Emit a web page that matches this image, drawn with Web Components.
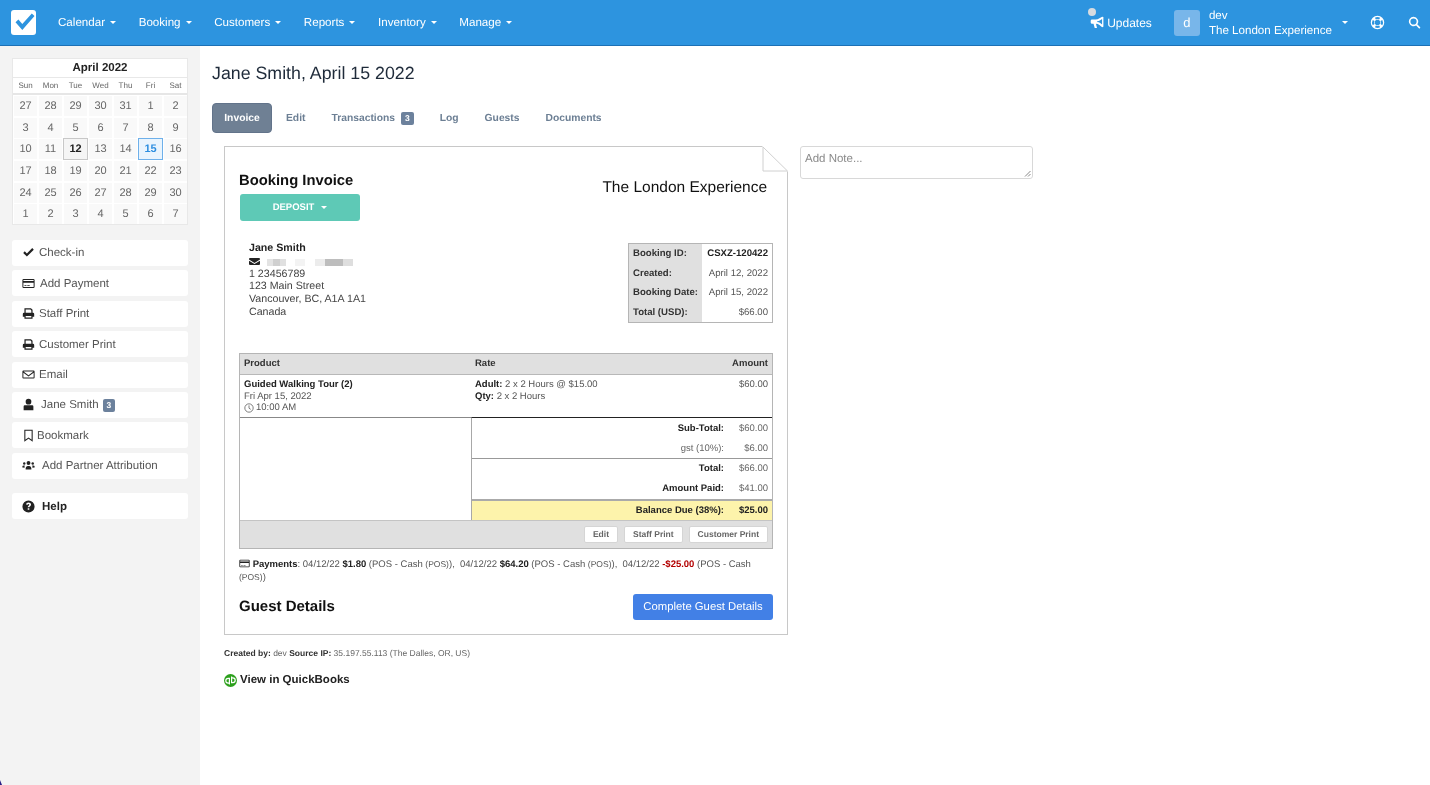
<!DOCTYPE html>
<html lang="en"><head><meta charset="utf-8"><title>Jane Smith</title>
<style>
html,body{margin:0;padding:0;height:100%}
body{font-family:"Liberation Sans",Arial,sans-serif;color:#333;background:#fff;overflow:hidden;text-rendering:geometricPrecision}
</style></head><body>
<app-shell></app-shell>
<script>
const I={
check:'<path d="M1.500 8.500 3.400 6.600 6 9.200 12.600 2.600 14.500 4.500 6 13z"/>',
card:'<path fill-rule="evenodd" d="M2 2.500h12A1.500 1.500 0 0 1 15.500 4v8a1.500 1.500 0 0 1-1.500 1.500H2A1.500 1.500 0 0 1 .5 12V4A1.500 1.500 0 0 1 2 2.500zm0 1.200a.3.3 0 0 0-.3.3v1h12.600V4a.3.3 0 0 0-.3-.3zM1.700 7.200V12a.3.3 0 0 0 .3.3h12a.3.3 0 0 0 .3-.3V7.200zM3 10h2.500v1H3zm3.500 0h3v1h-3z"/>',
print:'<path fill-rule="evenodd" d="M3 1.500h8l2 2V7h.5A1.500 1.500 0 0 1 15 8.500V12h-2v2.500H3V12H1V8.500A1.500 1.500 0 0 1 2.500 7H3zM4.500 3v4h7V4.200L10.400 3zM4.500 11v2h7v-2z"/>',
mail:'<path fill-rule="evenodd" d="M1.800 3h12.400A1.300 1.300 0 0 1 15.500 4.300v7.400a1.300 1.300 0 0 1-1.300 1.300H1.800A1.300 1.300 0 0 1 .5 11.700V4.300A1.300 1.300 0 0 1 1.800 3zm.1 1.200 6.100 4.700 6.100-4.700zm-.2 1.500v6.100h12.600V5.700L8 10.500z"/>',
mailf:'<path d="M1.500 3h13A1.500 1.500 0 0 1 16 4.500v.6L8 10 0 5.100v-.6A1.500 1.500 0 0 1 1.500 3zM0 6.800l8 4.900 8-4.900v4.700A1.500 1.500 0 0 1 14.500 13h-13A1.500 1.500 0 0 1 0 11.500z"/>',
user:'<circle cx="8" cy="4.500" r="3.500"/><path d="M3.500 9h9A1.500 1.500 0 0 1 14 10.500V15H2v-4.500A1.500 1.500 0 0 1 3.500 9z"/>',
bookmark:'<path fill="none" stroke="currentColor" stroke-width="1.300" d="M3.500 1.500h9v13L8 11.200 3.500 14.500z"/>',
users:'<circle cx="8" cy="5" r="2.400"/><circle cx="2.800" cy="5.500" r="1.500"/><circle cx="13.200" cy="5.500" r="1.500"/><path d="M4.500 13v-1.600A2.900 2.900 0 0 1 7 8.500h2a2.900 2.900 0 0 1 2.500 2.900V13z"/><path d="M.5 10.500A2 2 0 0 1 2.500 8h1A4 4 0 0 0 3.300 10.800zM15.500 10.500A2 2 0 0 0 13.500 8h-1a4 4 0 0 1 .2 2.800z"/>',
help:'<path fill-rule="evenodd" d="M8 .5a7.500 7.500 0 1 1 0 15 7.500 7.500 0 0 1 0-15zM8 3C6.300 3 5.200 4 5 5.500l2 .3C7.100 5.200 7.400 4.900 8 4.900c.6 0 1 .3 1 .8 0 1-2 1.200-2 3.300h2c0-1.300 2.100-1.500 2.100-3.500C11.100 4 9.700 3 8 3zM7 10v2h2v-2z"/>',
bullhorn:'<path fill-rule="evenodd" d="M15.300 1.200V12.400L13.900 12.800 10.800 10.200C9.600 9.300 8.200 8.900 6.800 8.800L8 13.600H5.400L4 8.800H2.300A1.500 1.500 0 0 1 .8 7.300V5.500A1.500 1.500 0 0 1 2.300 4H6.400C8 4 9.500 3.500 10.800 2.500L13.900.8zM13.800 3.300 11.700 4.800C10.600 5.500 9.400 5.900 8.200 6V6.900C9.400 7 10.600 7.400 11.700 8.100L13.800 9.700z"/>',
life:'<path fill-rule="evenodd" d="M8 .8a7.200 7.200 0 1 1 0 14.400A7.200 7.200 0 0 1 8 .8zM8 5.100a2.900 2.900 0 1 0 0 5.800 2.900 2.900 0 0 0 0-5.800zM5.200 2.900 6.300 4.800a3.600 3.600 0 0 1 3.400 0l1.100-1.900a5.800 5.800 0 0 0-5.600 0zM2.900 5.200a5.800 5.800 0 0 0 0 5.600l1.900-1.100a3.600 3.600 0 0 1 0-3.400zM13.100 5.200 11.200 6.300a3.600 3.600 0 0 1 0 3.400l1.900 1.100a5.800 5.800 0 0 0 0-5.600zM6.300 11.200 5.200 13.100a5.800 5.800 0 0 0 5.600 0L9.700 11.200a3.600 3.600 0 0 1-3.400 0z"/>',
search:'<path fill-rule="evenodd" d="M6.800 1a5.800 5.800 0 0 1 4.600 9.300l3.900 3.900-1.400 1.400-3.900-3.900A5.800 5.800 0 1 1 6.800 1zm0 2a3.800 3.800 0 1 0 0 7.600 3.800 3.800 0 0 0 0-7.600z"/>',
clock:'<circle cx="8" cy="8" r="6.700" fill="none" stroke="currentColor" stroke-width="1.200"/><path fill="none" stroke="currentColor" stroke-width="1.200" d="M8 3.800V8.300l2.800 1.900"/>'
};
const svg=(n,s=14,extra='')=>`<svg viewBox="0 0 16 16" width="${s}" height="${s}" fill="currentColor" style="display:block;flex:none;${extra}" aria-hidden="true">${I[n]}</svg>`;
function def(name,html,setup){
  customElements.define(name,class extends HTMLElement{
    constructor(){super();const r=this.attachShadow({mode:'open'});r.innerHTML=typeof html==='function'?html(this):html;}
    connectedCallback(){ if(typeof html==='function'){this.shadowRoot.innerHTML=html(this);} if(setup)setup(this);}
  });
}
const caret=c=>`<i style="display:inline-block;width:0;height:0;border:3.500px solid transparent;border-top:3.500px solid ${c};border-bottom:0;vertical-align:2px"></i>`;

def('nav-item',h=>`<style>:host{display:block;color:#fff;font-size:11.600px;white-space:nowrap}
span{margin-right:5px}</style><span>${h.getAttribute('label')||''}</span>${caret('#fff')}`);

def('top-bar',`<style>
:host{display:flex;align-items:center;height:45px;background:#2d94df;border-bottom:1px solid #1c70b5;box-sizing:content-box;color:#fff;flex:none}
.logo{width:25px;height:25px;background:#fff;border-radius:3px;margin-left:11px;margin-right:22px;flex:none;display:flex;align-items:center;justify-content:center}
nav{display:flex;gap:22.600px;flex:1}
.upd{position:relative;display:flex;align-items:center;gap:3px;font-size:12px;margin-right:22px}
.dot{position:absolute;left:-2px;top:-8px;width:8px;height:8px;border-radius:50%;background:#d6dbe0}
.acct{display:flex;align-items:center;margin-right:22px}
.ava{width:26px;height:26px;background:#78b6ea;border-radius:3px;display:flex;align-items:center;justify-content:center;font-size:13px;margin-right:9px}
.who{font-size:11.600px;line-height:15px;margin-right:10px;white-space:nowrap}
.r{display:flex;align-items:center}
</style>
<div class="logo"><svg viewBox="0 0 25 25" width="25" height="25" aria-hidden="true"><path d="M4.500 12.200 7.400 9.600 11.300 14 20.800 3.500 23.500 6 11.300 20z" fill="#2d94df"/></svg></div>
<nav><nav-item label="Calendar"></nav-item><nav-item label="Booking"></nav-item><nav-item label="Customers"></nav-item><nav-item label="Reports"></nav-item><nav-item label="Inventory"></nav-item><nav-item label="Manage"></nav-item></nav>
<div class="upd"><b class="dot"></b>${svg('bullhorn',14)}<span>Updates</span></div>
<div class="acct"><div class="ava">d</div><div class="who">dev<br>The London Experience</div>${caret('#fff')}</div>
<div class="r" style="margin-right:23px">${svg('life',15)}</div>
<div class="r" style="margin-right:9px">${svg('search',13)}</div>`);

def('mini-calendar',()=>{
 const days=[27,28,29,30,31,1,2,3,4,5,6,7,8,9,10,11,12,13,14,15,16,17,18,19,20,21,22,23,24,25,26,27,28,29,30,1,2,3,4,5,6,7];
 return `<style>
:host{display:block;width:176px;box-sizing:border-box;border:1px solid #e8e8e8;background:#fff;margin-bottom:14.500px}
.t{text-align:center;font-size:11.500px;font-weight:bold;color:#222;line-height:19px;height:18px;border-bottom:1px solid #e8e8e8}
.d,.g{display:grid;grid-template-columns:repeat(7,25px);}
.d{font-size:8px;color:#666;height:15px;line-height:15px;text-align:center;border-bottom:2px solid #e6e6e6;margin-bottom:1px}
.g{row-gap:1.700px}
.g div{height:20px;line-height:20px;margin:0 1px;font-size:11px;color:#666;background:#f9f9f9;text-align:center;box-sizing:border-box}
.g .a{border:1px solid #c8c8c8;background:#f5f5f5;color:#222;font-weight:bold;margin:-1px 0;height:22px}
.g .b{border:1px solid #6eb0ea;background:#e9f4fd;color:#2d8ee0;font-weight:bold;margin:-1px 0;height:22px}
</style><div class="t">April 2022</div>
<div class="d">${['Sun','Mon','Tue','Wed','Thu','Fri','Sat'].map(x=>`<span>${x}</span>`).join('')}</div>
<div class="g">${days.map((x,i)=>`<div class="${i==16?'a':i==19?'b':''}">${x}</div>`).join('')}</div>`});

def('side-btn',h=>`<style>:host{display:flex;align-items:center;height:26px;background:#fff;border-radius:3px;font-size:11.500px;color:#555;padding:1px 0 0 10px;box-sizing:border-box;margin-bottom:4.400px;white-space:nowrap}
:host([strong]){font-weight:bold;color:#222}
.ic{color:#222;margin:-1px ${h.getAttribute('gap')||6}px 0 0}
.bd{background:#6c819c;color:#fff;font-size:8.500px;font-weight:bold;border-radius:2px;padding:1px 4px;margin-left:4px;line-height:11px}
</style><span class="ic">${svg(h.getAttribute('icon'),13)}</span><slot></slot>${h.hasAttribute('badge')?`<span class="bd">${h.getAttribute('badge')}</span>`:''}`);

def('side-bar',`<style>:host{display:block;width:200px;flex:none;background:#f3f3f3;box-sizing:border-box;padding:12px 12px 0;height:739px}</style>
<mini-calendar></mini-calendar>
<side-btn icon="check" gap="4">Check-in</side-btn>
<side-btn icon="card" gap="5">Add Payment</side-btn>
<side-btn icon="print" gap="4">Staff Print</side-btn>
<side-btn icon="print" gap="4">Customer Print</side-btn>
<side-btn icon="mail" gap="4">Email</side-btn>
<side-btn icon="user" gap="6" badge="3">Jane Smith</side-btn>
<side-btn icon="bookmark" gap="2">Bookmark</side-btn>
<side-btn icon="users" gap="7">Add Partner Attribution</side-btn>
<div style="height:10px"></div>
<side-btn icon="help" gap="7" strong>Help</side-btn>`);

def('tab-bar',`<style>:host{display:flex;align-items:center;height:30px;font-size:10.300px;font-weight:bold;color:#6c7f94;white-space:nowrap}
.on{background:#6f8094;color:#fff;border-radius:4px;width:60px;height:30px;display:flex;align-items:center;justify-content:center;border:1px solid #62738a;box-sizing:border-box;margin-right:14px}
span{margin-right:26px;display:flex;align-items:center}
.bd{background:#6c819c;color:#fff;font-size:8.500px;border-radius:2px;padding:1px 4px;margin-left:6px;line-height:11px;display:block}
</style><div class="on">Invoice</div><span>Edit</span><span>Transactions<b class="bd">3</b></span><span>Log</span><span>Guests</span><span>Documents</span>`);

def('customer-card',`<style>:host{display:block;font-size:10.650px;line-height:12.800px;color:#444;padding:1px 0 0 10px}
b{color:#222}
.m{display:flex;align-items:center;height:12.800px;color:#222}
.blur{display:flex;margin-left:7px;height:7px;margin-top:3px}
.blur i{display:block;height:7px}
</style>
<b>Jane Smith</b>
<div class="m">${svg('mailf',11)}<div class="blur"><i style="width:6px;background:#e3e3e3"></i><i style="width:7px;background:#cfcfcf"></i><i style="width:6px;background:#e0e0e0"></i><i style="width:9px;background:#fff"></i><i style="width:10px;background:#f3f3f3"></i><i style="width:10px;background:#fff"></i><i style="width:10px;background:#ececec"></i><i style="width:18px;background:#bdbdbd"></i><i style="width:10px;background:#dedede"></i></div></div>
1 23456789<br>123 Main Street<br>Vancouver, BC, A1A 1A1<br>Canada`);

def('meta-table',`<style>:host{display:grid;grid-template-columns:73px 70px;grid-auto-rows:19.500px;width:145px;box-sizing:border-box;border:1px solid #b5b5b5;font-size:9.600px;color:#555;flex:none;background:linear-gradient(90deg,#e0e0e0 73px,#fff 73px)}
div{line-height:20px;white-space:nowrap}
.l{font-weight:bold;color:#333;padding-left:4px}
.v{text-align:right;padding-right:4px}
</style><div class="l">Booking ID:</div><div class="v" style="font-weight:bold;color:#222">CSXZ-120422</div>
<div class="l">Created:</div><div class="v">April 12, 2022</div>
<div class="l">Booking Date:</div><div class="v">April 15, 2022</div>
<div class="l">Total (USD):</div><div class="v">$66.00</div>`);

def('total-row',h=>`<style>:host{display:flex;justify-content:flex-end;height:20px;line-height:22px;font-size:9.500px;color:#666;padding-right:4px}
:host([tight]){line-height:20.500px}
.l{font-weight:bold;color:#222;margin-right:14px}
:host([plain]) .l{font-weight:normal;color:#666}
:host([hi]){background:#fdf3ab;color:#222;font-weight:bold;height:auto;flex:1;align-items:flex-start;line-height:19px}
span:last-child{width:30px;text-align:right}
</style><span class="l">${h.getAttribute('label')}</span><span>${h.getAttribute('value')}</span>`);

def('mini-btn',`<style>:host{display:block;background:#fff;border:1px solid #d5d5d5;border-radius:2px;font-size:8.500px;font-weight:bold;color:#666;height:17px;line-height:15px;padding:0 8px;box-sizing:border-box;white-space:nowrap}</style><slot></slot>`);

def('line-table',`<style>:host{display:block;border:1px solid #b5b5b5;font-size:9.500px;color:#555}
.c1{width:231px;flex:none;box-sizing:border-box}
.h{display:flex;background:#e0e0e0;height:20px;line-height:20.500px;font-weight:bold;color:#333;border-bottom:1px solid #b8b8b8;padding-left:4px}
.h .c1{width:227px;margin-right:4px}
.h span:last-child{margin-left:auto;padding-right:4px}
.p{display:flex;height:43px;padding:4px 4px 0;box-sizing:border-box;line-height:11.700px;border-bottom:1px solid #888}
.p .c1{width:227px;margin-right:4px}
.p b{color:#222}
.ck{display:flex;align-items:center;gap:2px}
.am{margin-left:auto}
.t{display:flex;height:102px}
.x{flex:1;border-left:1px solid #a8a8a8;border-top:1px solid #222;margin-top:-1px;display:flex;flex-direction:column;box-sizing:border-box;height:103px}
.grp{border-bottom:1px solid #999;height:40px;flex:none}
.grp.s{border-bottom:2px solid #aaa}
.f{display:flex;justify-content:flex-end;gap:6px;align-items:center;height:28px;background:#e0e0e0;border-top:1px solid #c4c4c4;padding-right:4px;box-sizing:border-box}
</style>
<div class="h"><span class="c1">Product</span><span>Rate</span><span>Amount</span></div>
<div class="p"><div class="c1"><b>Guided Walking Tour (2)</b><br>Fri Apr 15, 2022<div class="ck">${svg('clock',10)}10:00 AM</div></div><div><b>Adult:</b> 2 x 2 Hours @ $15.00<br><b>Qty:</b> 2 x 2 Hours</div><div class="am">$60.00</div></div>
<div class="t"><div class="c1"></div><div class="x"><div class="grp"><total-row label="Sub-Total:" value="$60.00"></total-row><total-row plain label="gst (10%):" value="$6.00"></total-row></div><div class="grp s"><total-row tight label="Total:" value="$66.00"></total-row><total-row tight label="Amount Paid:" value="$41.00"></total-row></div><total-row hi label="Balance Due (38%):" value="$25.00"></total-row></div></div>
<div class="f"><mini-btn>Edit</mini-btn><mini-btn>Staff Print</mini-btn><mini-btn>Customer Print</mini-btn></div>`);

def('invoice-doc',`<style>:host{display:block;position:relative;width:564px;height:489px;box-sizing:border-box;border:1px solid #c8c8c8;padding:0 14px;background:#fff;flex:none}
.fold{position:absolute;right:-1px;top:-1px;width:26px;height:26px}
.top{display:flex;justify-content:space-between;padding-top:25px}
h2{margin:0;font-size:14.800px;line-height:18px;color:#111;font-weight:bold}
.dep{width:120px;height:27px;margin:4px 0 0 1px;background:#5ec9b6;border-radius:3px;color:#fff;font-weight:bold;font-size:9.500px;display:flex;align-items:center;justify-content:center;gap:7px}
.co{font-size:15.500px;color:#111;margin:7px 6px 0 0;line-height:18px}
.mid{display:flex;justify-content:space-between;margin-top:20px;height:112px}
.pay{font-size:9.500px;line-height:13px;color:#555;margin-top:9px;height:26px}
.pay b{color:#222}.pay small{font-size:8.500px}.pay .red{color:#b30000}
.pay svg{display:inline-block!important;vertical-align:-2px}
.g{display:flex;justify-content:space-between;align-items:center;margin-top:10px}
.g h2{font-size:15px}
.cta{width:140px;height:26px;background:#4280e6;border-radius:3px;color:#fff;font-size:11.300px;display:flex;align-items:center;justify-content:center}
</style>
<svg class="fold" viewBox="0 0 26 26" aria-hidden="true"><path d="M0 0 L26 26 V0Z" fill="#fff"/><path d="M1 1 V25 H25.500 Z" fill="#fff" stroke="#d0d0d0"/></svg>
<div class="top"><div><h2>Booking Invoice</h2><div class="dep"><span>DEPOSIT</span>${caret('#fff')}</div></div><div class="co">The London Experience</div></div>
<div class="mid"><customer-card></customer-card><meta-table style="height:80px;align-self:flex-start;margin-top:2px"></meta-table></div>
<line-table></line-table>
<div class="pay">${svg('card',11,'display:inline-block;color:#222;')} <b>Payments</b>: 04/12/22 <b>$1.80</b> (POS - Cash <small>(POS)</small>),&nbsp; 04/12/22 <b>$64.20</b> (POS - Cash <small>(POS)</small>),&nbsp; 04/12/22 <b class="red">-$25.00</b> (POS - Cash <small>(POS)</small>)</div>
<div class="g"><h2>Guest Details</h2><div class="cta">Complete Guest Details</div></div>`);

def('note-box',`<style>:host{display:block;width:233px;height:33px;box-sizing:border-box;border:1px solid #d8d8d8;border-radius:3px;position:relative;padding:6px 4px;font-size:11.500px;color:#8a8a8a;flex:none;margin-left:12px}
svg{position:absolute;right:1px;bottom:1px}</style>Add Note...<svg width="7" height="7" viewBox="0 0 7 7" aria-hidden="true"><path d="M1 6.500 6.500 1M4 6.500 6.500 4" stroke="#888" fill="none"/></svg>`);

def('main-pane',`<style>:host{display:block;flex:1;box-sizing:border-box;padding:0 12px;min-width:0}
h1{margin:0;font-size:17.800px;font-weight:normal;color:#1f2b3a;line-height:22px;padding-top:16px;height:57px;box-sizing:border-box}
.row{display:flex;margin:13px 0 0 12px;align-items:flex-start}
.src{margin:13px 0 0 12px;font-size:8.500px;line-height:11px;color:#666}
.src b{color:#333}
.qb{display:flex;align-items:center;gap:3px;margin:14px 0 0 12px;font-size:11.500px;font-weight:bold;color:#222;line-height:14px}
</style><h1>Jane Smith, April 15 2022</h1>
<tab-bar></tab-bar>
<div class="row"><invoice-doc></invoice-doc><note-box></note-box></div>
<div class="src"><b>Created by:</b> dev <b>Source IP:</b> 35.197.55.113 (The Dalles, OR, US)</div>
<div class="qb"><svg width="13" height="13" viewBox="0 0 13 13" aria-hidden="true"><circle cx="6.500" cy="6.500" r="6.500" fill="#2ca01c"/><path fill="none" stroke="#fff" stroke-width="1.200" d="M5.200 9.200H4.200a2.400 2.400 0 0 1 0-4.800h1.200v6.200M7.800 3.800h1a2.400 2.400 0 0 1 0 4.800H7.600V2.400"/></svg>View in QuickBooks</div>`);

def('app-shell',`<style>:host{display:flex;flex-direction:column;height:785px;width:1430px;position:relative;will-change:transform}
.b{display:flex;flex:1;min-height:0}
.c{position:absolute;left:0;bottom:0;width:0;height:0;border-left:2px solid #2a1f86;border-top:5px solid transparent}
</style><top-bar></top-bar><div class="b"><side-bar></side-bar><main-pane></main-pane></div><div class="c"></div>`);
</script>
</body></html>
